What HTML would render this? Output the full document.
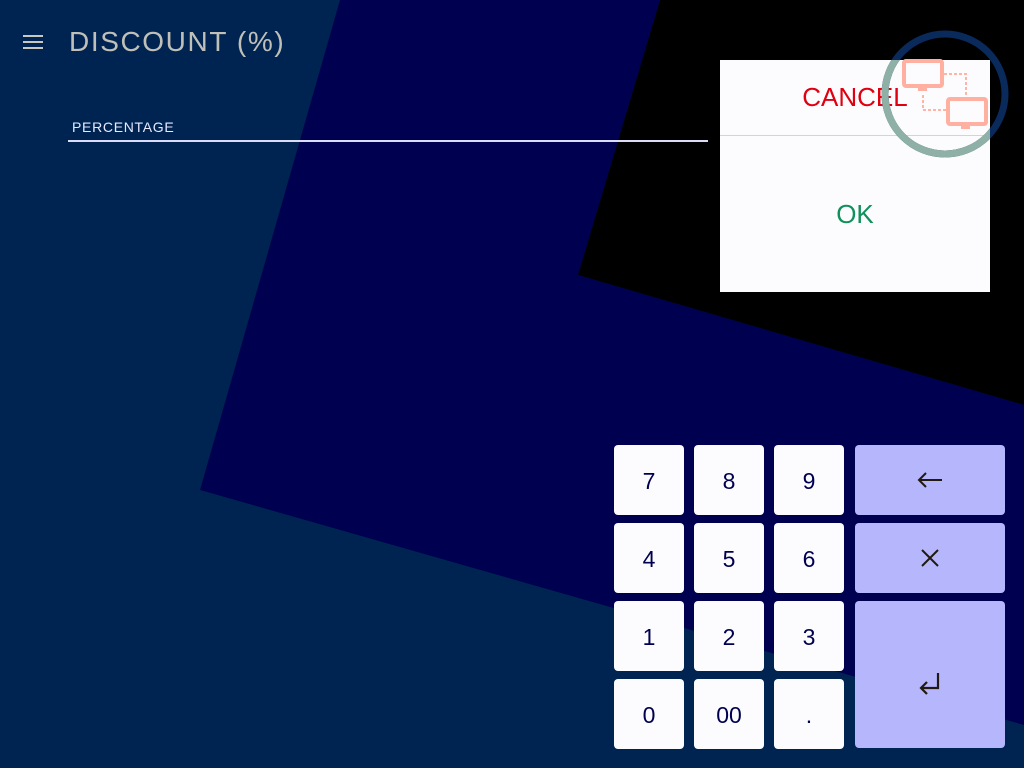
<!DOCTYPE html>
<html><head><meta charset="utf-8"><style>
*{margin:0;padding:0;box-sizing:border-box}
body{width:1024px;height:768px;overflow:hidden;background:#002452;font-family:"Liberation Sans",sans-serif;position:relative}
.k{position:absolute;width:70px;height:70px;background:#fcfcff;border-radius:4px;color:#000050;font-size:23px;display:flex;align-items:center;justify-content:center;padding-top:3px}
.a{position:absolute;left:855px;width:150px;background:#b6b6fc;border-radius:4px;display:flex;align-items:center;justify-content:center}
</style></head><body>
<svg width="1024" height="768" style="position:absolute;left:0;top:0">
<polygon points="340,0 660,0 578,275 1024,405 1024,725 200,490" fill="#000050"/>
<polygon points="660,0 1024,0 1024,405 578,275" fill="#000"/>
</svg>
<svg width="24" height="18" style="position:absolute;left:22px;top:33px"><g stroke="#c8c8c0" stroke-width="2"><line x1="1" y1="3" x2="21" y2="3"/><line x1="1" y1="9" x2="21" y2="9"/><line x1="1" y1="15" x2="21" y2="15"/></g></svg>
<div style="position:absolute;left:69px;top:26px;font-size:28px;color:#c0c0b8;letter-spacing:1.6px">DISCOUNT (%)</div>
<div style="position:absolute;left:72px;top:119px;font-size:14px;color:#e8e8ff;letter-spacing:0.7px">PERCENTAGE</div>
<div style="position:absolute;left:68px;top:140px;width:640px;height:2px;background:#dcdcf8"></div>
<div style="position:absolute;left:720px;top:60px;width:270px;height:232px;background:#fcfcff"></div>
<div style="position:absolute;left:720px;top:135px;width:270px;height:1px;background:#d0d0f0"></div>
<div style="position:absolute;left:720px;top:82px;width:270px;text-align:center;font-size:26px;color:#e00010">CANCEL</div>
<div style="position:absolute;left:720px;top:199px;width:270px;text-align:center;font-size:26px;color:#10905a">OK</div>
<svg width="1024" height="768" style="position:absolute;left:0;top:0">
<defs><clipPath id="c"><rect x="720" y="60" width="270" height="232"/></clipPath></defs>
<circle cx="945" cy="94" r="60" fill="none" stroke="#0a2a5c" stroke-width="7"/>
<circle cx="945" cy="94" r="60" fill="none" stroke="#8fb0a6" stroke-width="7" clip-path="url(#c)"/>
<g fill="none" stroke="#ffb4a4" stroke-width="2" stroke-dasharray="3 2"><path d="M944 74 H966 V98"/><path d="M923 95 V110 H946"/></g>
<rect x="904" y="61" width="38" height="25" rx="2" fill="#fcfcff" stroke="#ffb0a0" stroke-width="4"/>
<rect x="918" y="87" width="9" height="4" fill="#ffb0a0"/>
<rect x="948" y="99" width="38" height="25" rx="2" fill="#fcfcff" stroke="#ffb0a0" stroke-width="4"/>
<rect x="961" y="125" width="9" height="4" fill="#ffb0a0"/>
</svg>
<div class="k" style="left:614px;top:445px">7</div><div class="k" style="left:694px;top:445px">8</div><div class="k" style="left:774px;top:445px">9</div>
<div class="k" style="left:614px;top:523px">4</div><div class="k" style="left:694px;top:523px">5</div><div class="k" style="left:774px;top:523px">6</div>
<div class="k" style="left:614px;top:601px">1</div><div class="k" style="left:694px;top:601px">2</div><div class="k" style="left:774px;top:601px">3</div>
<div class="k" style="left:614px;top:679px">0</div><div class="k" style="left:694px;top:679px">00</div><div class="k" style="left:774px;top:679px">.</div>
<div class="a" style="top:445px;height:70px"><svg width="26" height="16"><g stroke="#221a10" stroke-width="2" fill="none"><path d="M2 8H25M9 1L2 8L9 15"/></g></svg></div>
<div class="a" style="top:523px;height:70px"><svg width="20" height="20"><g stroke="#221a10" stroke-width="2"><path d="M2 2L18 18M18 2L2 18"/></g></svg></div>
<div class="a" style="top:601px;height:147px;padding-top:18px"><svg width="24" height="24"><g stroke="#221a10" stroke-width="2.2" fill="none"><path d="M20 1V16H3M9 10L3 16L9 22"/></g></svg></div>
</body></html>
